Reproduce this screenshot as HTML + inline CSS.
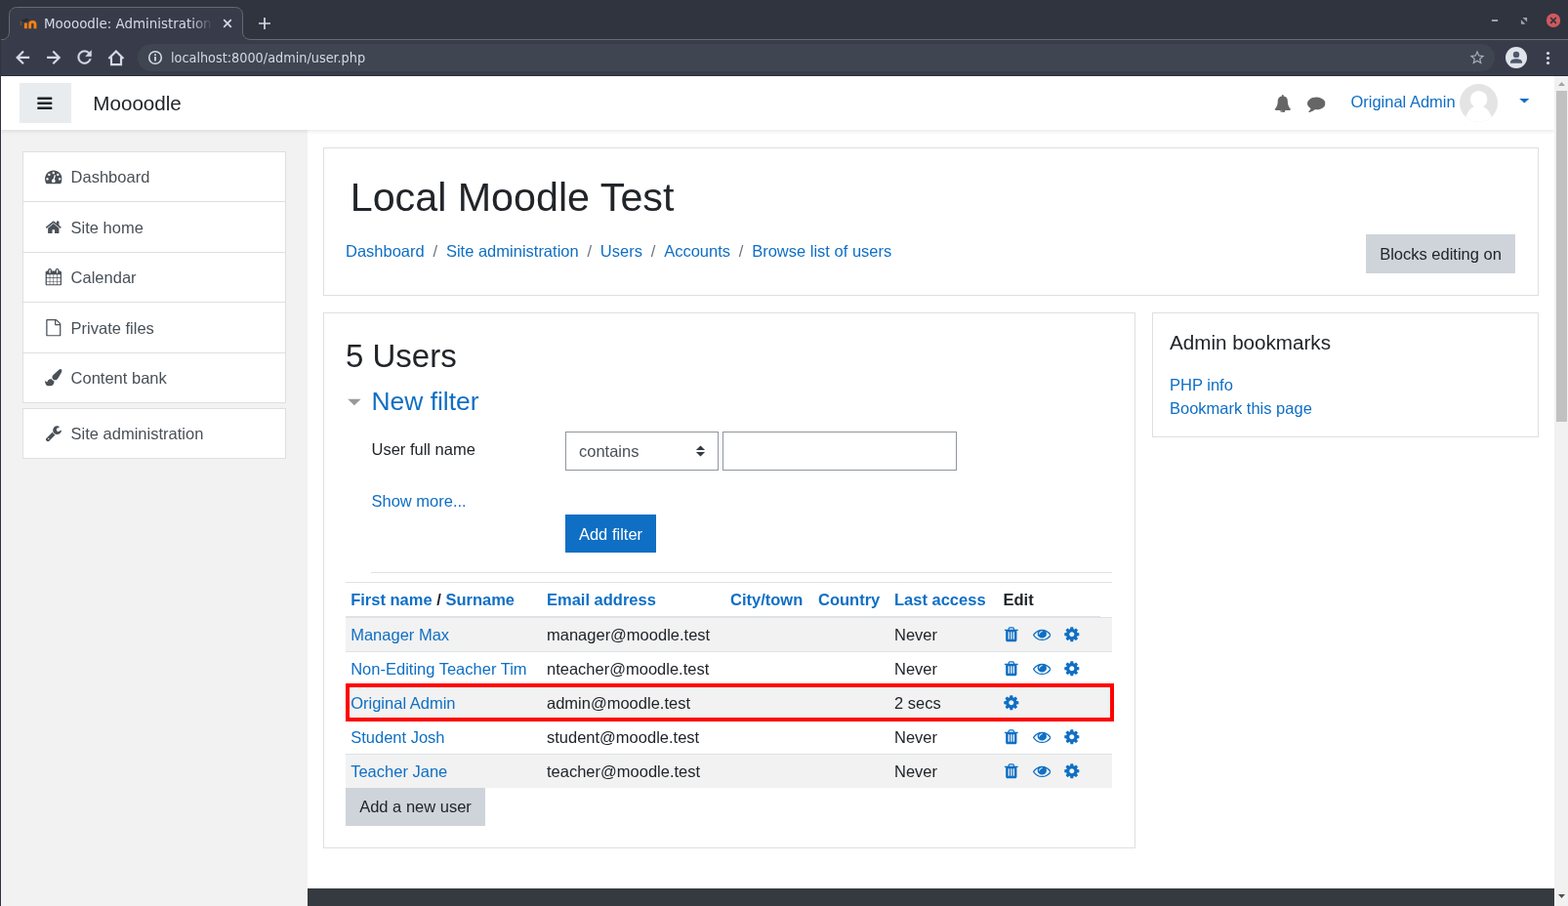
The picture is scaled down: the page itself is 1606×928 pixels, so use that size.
<!DOCTYPE html>
<html lang="en">
<head>
<meta charset="utf-8">
<title>Moooodle: Administration: Users: Accounts: Browse list of users</title>
<style>
*{box-sizing:border-box;margin:0;padding:0}
html,body{width:1606px;height:928px;overflow:hidden;background:#fff}
body{font-family:"Liberation Sans",Arial,sans-serif;font-size:16.5px;color:#212529;line-height:1.5;position:relative}
a{color:#0f6fc5;text-decoration:none}
.abs{position:absolute}
/* ---------- browser chrome ---------- */
#tabbar{position:absolute;left:0;top:0;width:1606px;height:41px;background:#2f343f}
#tab{position:absolute;left:9px;top:7px;width:240px;height:34px;background:#383c4a;border-radius:8px 8px 0 0;border:1px solid #4b5162;border-bottom:none}
#tabline{position:absolute;left:0;top:40px;width:1606px;height:1px;background:#666a75}
#toolbar{position:absolute;left:0;top:41px;width:1606px;height:37px;background:#383c4a}
#omni{position:absolute;left:141px;top:45px;width:1390px;height:28px;border-radius:14px;background:#404552}
.ui{font-family:"DejaVu Sans Condensed","Liberation Sans",sans-serif;color:#d3dae3;white-space:nowrap}
#winborder{position:absolute;left:0;top:0;width:1px;height:928px;background:#2f343f;z-index:50}
/* ---------- page ---------- */
#vp{position:absolute;left:1px;top:78px;width:1591px;height:850px;overflow:hidden;background:#fff}
#nav{position:absolute;left:0;top:0;width:1591px;height:55px;background:#fff;box-shadow:0 2px 4px rgba(0,0,0,.08);z-index:5}
#drawer{position:absolute;left:0;top:55px;width:314px;height:795px;background:#f2f2f2}
.li{position:absolute;left:22px;width:270px;border:1px solid #dfdfdf;background:#fff;color:#495057}
.li span{position:absolute;left:48.600px;top:13px;line-height:25px;white-space:nowrap}
.li svg{position:absolute;left:22px;top:16px;width:17.6px;height:17.6px;fill:#495057}
.card{position:absolute;border:1px solid #dfdfdf;background:#fff}
#footer{position:absolute;left:314px;top:832px;width:1277px;height:18px;background:#343a40}
#sb{position:absolute;left:1592px;top:78px;width:14px;height:850px;background:#f1f1f1}
#sbthumb{position:absolute;left:2px;top:15px;width:11px;height:339px;background:#c1c1c1}
.btn{position:absolute;white-space:nowrap;text-align:center;line-height:40px;height:40px}
.t{position:absolute;white-space:nowrap;line-height:1}
#vp,#url,#tabtitle{will-change:transform}

.crumb{position:absolute;top:166.5px;font-size:16.5px;line-height:25px;white-space:nowrap}
.sep{color:#6c757d;margin:0 8.8px}
#tbl{position:absolute;left:353px;top:518px;width:785px}
.row{position:absolute;left:0;width:785px;height:35px;border-top:1px solid #dee2e6}
.row.odd{background:#f2f2f2}
.c{position:absolute;top:5px;line-height:25px;white-space:nowrap;font-size:16.5px}
.th{position:absolute;top:6px;line-height:25px;white-space:nowrap;font-size:16.5px;font-weight:bold}
.ic{position:absolute;fill:#0f6fc5;width:17.6px;height:17.6px;top:8.3px;margin-left:-0.7px}
.ic.eye{width:18.6px;margin-left:-0.9px}

.ci{position:absolute;fill:#d3dae3}
.ci.b{stroke:#d3dae3;stroke-width:.35px}
</style>
</head>
<body>
<svg width="0" height="0" style="position:absolute"><defs>
<symbol id="i-cog" viewBox="0 0 1792 1792"><path d="M1152 896q0-106-75-181t-181-75-181 75-75 181 75 181 181 75 181-75 75-181zm512-109v222q0 12-8 23t-20 13l-185 28q-19 54-39 91 35 50 107 138 10 12 10 25t-9 23q-27 37-99 108t-94 71q-12 0-26-9l-138-108q-44 23-91 38-16 136-29 186-7 28-36 28h-222q-14 0-24.500-8.500t-11.500-21.500l-28-184q-49-16-90-37l-141 107q-10 9-25 9-14 0-25-11-126-114-165-168-7-10-7-23 0-12 8-23 15-21 51-66.500t54-70.500q-27-50-41-99l-183-27q-13-2-21-12.500t-8-23.500v-222q0-12 8-23t19-13l186-28q14-46 39-92-40-57-107-138-10-12-10-24 0-10 9-23 26-36 98.500-107.500t94.500-71.500q13 0 26 10l138 107q44-23 91-38 16-136 29-186 7-28 36-28h222q14 0 24.500 8.500t11.500 21.500l28 184q49 16 90 37l142-107q9-9 24-9 13 0 25 10 129 119 165 170 7 8 7 22 0 12-8 23-15 21-51 66.500t-54 70.500q26 50 41 98l183 28q13 2 21 12.500t8 23.500z"/></symbol>
<symbol id="i-eye" viewBox="0 0 1792 1792"><path d="M1664 960q-152-236-381-353 61 104 61 225 0 185-131.500 316.500t-316.500 131.500-316.500-131.500-131.500-316.500q0-121 61-225-229 117-381 353 133 205 333.500 326.500t434.500 121.500 434.500-121.500 333.500-326.500zm-720-384q0-20-14-34t-34-14q-125 0-214.500 89.500t-89.500 214.500q0 20 14 34t34 14 34-14 14-34q0-86 61-147t147-61q20 0 34-14t14-34zm848 384q0 34-20 69-140 230-376.500 368.500t-499.500 138.500-499.500-139-376.500-368q-20-35-20-69t20-69q140-229 376.500-368t499.500-139 499.500 139 376.500 368q20 35 20 69z"/></symbol>
<symbol id="i-trash" viewBox="0 0 1792 1792"><path d="M704 1376v-704q0-14-9-23t-23-9h-64q-14 0-23 9t-9 23v704q0 14 9 23t23 9h64q14 0 23-9t9-23zm256 0v-704q0-14-9-23t-23-9h-64q-14 0-23 9t-9 23v704q0 14 9 23t23 9h64q14 0 23-9t9-23zm256 0v-704q0-14-9-23t-23-9h-64q-14 0-23 9t-9 23v704q0 14 9 23t23 9h64q14 0 23-9t9-23zm-544-992h448l-48-117q-7-9-17-11h-317q-10 2-17 11zm928 32v64q0 14-9 23t-23 9h-96v948q0 83-47 143.500t-113 60.500h-832q-66 0-113-58.500t-47-141.500v-952h-96q-14 0-23-9t-9-23v-64q0-14 9-23t23-9h309l70-167q15-37 54-63t79-26h320q40 0 79 26t54 63l70 167h309q14 0 23 9t9 23z"/></symbol>
<symbol id="i-home" viewBox="0 0 1792 1792"><path d="M1472 992v480q0 26-19 45t-45 19h-384v-384h-256v384h-384q-26 0-45-19t-19-45v-480q0-1 .5-3t.5-3l575-474 575 474q1 2 1 6zm223-69l-62 74q-8 9-21 11h-3q-13 0-21-7l-692-577-692 577q-12 8-24 7-13-2-21-11l-62-74q-8-10-7-23.500t11-21.500l719-599q32-26 76-26t76 26l244 204v-195q0-14 9-23t23-9h192q14 0 23 9t9 23v408l219 182q10 8 11 21.500t-7 23.500z"/></symbol>
<symbol id="i-bars" viewBox="0 0 1792 1792"><path d="M1664 1344v128q0 26-19 45t-45 19h-1408q-26 0-45-19t-19-45v-128q0-26 19-45t45-19h1408q26 0 45 19t19 45zm0-512v128q0 26-19 45t-45 19h-1408q-26 0-45-19t-19-45v-128q0-26 19-45t45-19h1408q26 0 45 19t19 45zm0-512v128q0 26-19 45t-45 19h-1408q-26 0-45-19t-19-45v-128q0-26 19-45t45-19h1408q26 0 45 19t19 45z"/></symbol>
<symbol id="i-bell" viewBox="0 0 1792 1792"><path d="M912 1696q0-16-16-16-59 0-101.500-42.500t-42.500-101.500q0-16-16-16t-16 16q0 73 51.500 124.500t124.500 51.500q16 0 16-16zm816-288q0 52-38 90t-90 38h-448q0 106-75 181t-181 75-181-75-75-181h-448q-52 0-90-38t-38-90q50-42 91-88t85-119.500 74.500-158.500 50-206 19.500-260q0-152 117-282.500t307-158.500q-8-19-8-39 0-40 28-68t68-28 68 28 28 68q0 20-8 39 190 28 307 158.500t117 282.500q0 139 19.500 260t50 206 74.500 158.500 85 119.500 91 88z"/></symbol>
<symbol id="i-comment" viewBox="0 0 1792 1792"><path d="M1792 896q0 174-120 321.500t-326 233-450 85.500q-70 0-145-8-198 175-460 242-49 14-114 22-17 2-30.500-9t-17.500-29v-1q-3-4-.5-12t2-10 4.500-9.500l6-9 7-8.500 8-9q7-8 31-34.500t34.500-38 31-39.500 32.500-51 27-59 26-76q-157-89-247.500-220t-90.500-281q0-130 71-248.500t191-204.500 286-136.500 348-50.500q244 0 450 85.500t326 233 120 321.500z"/></symbol>
<symbol id="i-caret" viewBox="0 0 1792 1792"><path d="M1408 704q0 26-19 45l-448 448q-19 19-45 19t-45-19l-448-448q-19-19-19-45t19-45 45-19h896q26 0 45 19t19 45z"/></symbol>
<symbol id="i-calendar" viewBox="0 0 1792 1792"><path d="M192 1664h288v-288h-288v288zm352 0h320v-288h-320v288zm-352-352h288v-320h-288v320zm352 0h320v-320h-320v320zm-352-384h288v-288h-288v288zm736 736h320v-288h-320v288zm-384-736h320v-288h-320v288zm768 736h288v-288h-288v288zm-384-352h320v-320h-320v320zm-352-864v-288q0-13-9.500-22.500t-22.500-9.500h-64q-13 0-22.500 9.500t-9.500 22.500v288q0 13 9.500 22.500t22.500 9.500h64q13 0 22.500-9.500t9.500-22.500zm736 864h288v-320h-288v320zm-384-384h320v-288h-320v288zm384 0h288v-288h-288v288zm32-480v-288q0-13-9.500-22.500t-22.500-9.500h-64q-13 0-22.500 9.500t-9.500 22.500v288q0 13 9.500 22.500t22.500 9.500h64q13 0 22.500-9.500t9.500-22.500zm384-64v1280q0 52-38 90t-90 38h-1408q-52 0-90-38t-38-90v-1280q0-52 38-90t90-38h128v-96q0-66 47-113t113-47h64q66 0 113 47t47 113v96h384v-96q0-66 47-113t113-47h64q66 0 113 47t47 113v96h128q52 0 90 38t38 90z"/></symbol>
<symbol id="i-file" viewBox="0 0 1792 1792"><path d="M1596 380q28 28 48 76t20 88v1152q0 40-28 68t-68 28h-1344q-40 0-68-28t-28-68v-1600q0-40 28-68t68-28h896q40 0 88 20t76 48zm-444-244v376h376q-10-29-22-41l-313-313q-12-12-41-22zm384 1528v-1024h-416q-40 0-68-28t-28-68v-416h-768v1536h1280z"/></symbol>
<symbol id="i-wrench" viewBox="0 0 1792 1792"><path d="M448 1472q0-26-19-45t-45-19-45 19-19 45 19 45 45 19 45-19 19-45zm644-420l-682 682q-37 37-90 37-52 0-91-37l-106-108q-38-36-38-90 0-53 38-91l681-681q39 98 114.500 173.500t173.500 114.500zm634-435q0 39-23 106-47 134-164.500 217.500t-258.500 83.500q-185 0-316.500-131.500t-131.500-316.500 131.500-316.500 316.500-131.500q58 0 121.500 16.500t107.500 46.500q16 11 16 28t-16 28l-293 169v224l193 107q5-3 79-48.500t135.500-81 70.500-35.500q15 0 23.500 10t8.500 25z"/></symbol>
<symbol id="i-tacho" viewBox="0 0 1792 1792"><path d="M384 1152q0-53-37.500-90.500t-90.500-37.500-90.500 37.500-37.500 90.500 37.500 90.500 90.500 37.500 90.500-37.500 37.500-90.500zm192-448q0-53-37.500-90.500t-90.500-37.500-90.500 37.500-37.500 90.500 37.500 90.500 90.500 37.500 90.500-37.500 37.500-90.500zm428 481l101-382q6-26-7.500-48.500t-38.500-29.500-48 6.500-30 39.500l-101 382q-60 5-107 43.500t-63 98.500q-20 77 20 146t117 89 146-20 89-117q16-60-6-117t-72-91zm660-33q0-53-37.500-90.500t-90.500-37.500-90.500 37.500-37.500 90.500 37.500 90.500 90.500 37.500 90.500-37.500 37.500-90.500zm-640-640q0-53-37.500-90.500t-90.500-37.500-90.500 37.500-37.500 90.500 37.500 90.500 90.500 37.500 90.500-37.500 37.500-90.500zm448 192q0-53-37.500-90.500t-90.500-37.500-90.500 37.500-37.500 90.500 37.500 90.500 90.500 37.500 90.500-37.500 37.500-90.500zm320 448q0 261-141 483-19 29-54 29h-1402q-35 0-54-29-141-221-141-483 0-182 71-348t191-286 286-191 348-71 348 71 286 191 191 286 71 348z"/></symbol>
<symbol id="i-brush" viewBox="0 0 1792 1792"><path d="M1615 0q70 0 122.500 46.500t52.500 116.500q0 63-45 151-332 629-465 752-97 91-218 91-126 0-216.500-92.500t-90.500-219.500q0-128 92-212l638-579q59-54 130-54zm-909 1034q39 76 106.500 130t150.500 76l1 71q4 213-129.500 347t-348.500 134q-123 0-218-46.500t-152.500-127.500-86.500-183-29-220q7 5 41 30t62 44.500 59 36.500 46 17q41 0 55-37 25-66 57.500-112.500t69.500-76 88-47.500 103-25.500 125-10.500z"/></symbol>
</defs></svg>
<div id="tabbar"></div>
<div id="tabline"></div>
<div id="toolbar"></div>
<div id="omni"></div>
<div class="abs" style="left:0;top:77px;width:1606px;height:1px;background:#2b2e39"></div>
<svg class="abs" style="left:0;top:0" width="270" height="42" viewBox="0 0 270 42"><path d="M0.5 41 C6 41 9.5 38 9.5 32 L9.5 15.5 C9.5 10.5 12.5 7.5 17.5 7.5 L240.5 7.5 C245.5 7.5 248.5 10.5 248.5 15.5 L248.5 32 C248.5 38 252 40.5 258 40.5 L258 42 L0.5 42 Z" fill="#383c4a" stroke="#666a75" stroke-width="1"/><rect x="0" y="41" width="270" height="1" fill="#383c4a"/></svg>
<svg class="abs" style="left:20px;top:17px" width="19" height="13" viewBox="0 0 19 13"><rect x="4.900" y="6.500" width="2.900" height="5.700" fill="#f98012"/><path d="M10.650 12.200V8a2.650 2.650 0 0 1 5.300 0v4.200" fill="none" stroke="#f98012" stroke-width="2.900"/><path d="M1.400 4.800v4.300" stroke="#f98012" stroke-width="0.800" opacity=".55"/><path d="M1.600 4.100L7.200 1.700l3.300 1.500L5.600 5.800z" fill="#2b2b2b"/></svg>
<svg class="ci" style="left:227px;top:18px" width="12" height="12" viewBox="0 0 12 12"><path d="M2.2 2.2l7.6 7.6M9.8 2.2l-7.6 7.6" stroke="#d3dae3" stroke-width="1.7" fill="none"/></svg>
<svg class="ci" style="left:264px;top:17px" width="14" height="14" viewBox="0 0 14 14"><path d="M7 1v12M1 7h12" stroke="#d3dae3" stroke-width="1.7" fill="none"/></svg>
<svg class="abs" style="left:12px;top:48px" width="22" height="22" viewBox="0 0 22 22" fill="none" stroke="#d3dae3" stroke-width="2.150"><path d="M12 4.500L5.600 10.900l6.400 6.400M6.500 10.900H18.200"/></svg>
<svg class="abs" style="left:44px;top:48px" width="22" height="22" viewBox="0 0 22 22" fill="none" stroke="#d3dae3" stroke-width="2.150"><path d="M10.300 4.500l6.400 6.400-6.400 6.400M4.100 10.900H15.800"/></svg>
<svg class="ci b" style="left:76.300px;top:48px" width="21.200" height="21.200" viewBox="0 0 24 24"><path d="M17.65 6.35C16.2 4.9 14.21 4 12 4c-4.42 0-7.99 3.58-7.99 8s3.57 8 7.99 8c3.73 0 6.84-2.55 7.73-6h-2.08c-.82 2.33-3.04 4-5.65 4-3.31 0-6-2.69-6-6s2.69-6 6-6c1.66 0 3.14.69 4.22 1.78L13 11h7V4l-2.35 2.35z"/></svg>
<svg class="abs" style="left:108px;top:48px" width="22" height="22" viewBox="0 0 22 22" fill="none" stroke="#d3dae3" stroke-width="2.150"><path d="M3.400 11.900L10.930 4.450l7.530 7.450"/><path d="M6 10.300V18.050h10.030V10.300"/></svg>
<svg class="ci" style="left:150.900px;top:51.300px" width="16" height="16" viewBox="0 0 16 16"><circle cx="8" cy="8" r="6.300" fill="none" stroke="#d3dae3" stroke-width="1.600"/><rect x="7.100" y="7" width="1.800" height="4.500"/><rect x="7.100" y="4.300" width="1.800" height="1.800"/></svg>
<svg class="ci" style="left:1504px;top:50.3px;fill:#a9adb7" width="18" height="18" viewBox="0 0 24 24"><path d="M22 9.24l-7.19-.62L12 2 9.19 8.63 2 9.24l5.46 4.73L5.82 21 12 17.27 18.18 21l-1.63-7.03L22 9.24zM12 15.4l-3.76 2.27 1-4.28-3.32-2.88 4.38-.38L12 6.1l1.71 4.04 4.38.38-3.32 2.88 1 4.28L12 15.4z"/></svg>
<svg class="abs" style="left:1542.100px;top:48.050px" width="22" height="22" viewBox="0 0 22 22"><circle cx="11" cy="11" r="11" fill="#dfe3ea"/><circle cx="11" cy="7.900" r="3.200" fill="#4f586b"/><path d="M5 15.600c0-2.200 3-3.400 6-3.400s6 1.200 6 3.400v1.100H5z" fill="#4f586b"/></svg>
<svg class="ci" style="left:1583px;top:52px" width="5" height="16" viewBox="0 0 5 16"><circle cx="2.500" cy="2.500" r="1.600"/><circle cx="2.500" cy="7.500" r="1.600"/><circle cx="2.500" cy="12.500" r="1.600"/></svg>
<svg class="abs" style="left:1526px;top:13px" width="80" height="16" viewBox="0 0 80 16"><rect x="1.900" y="6.900" width="6.200" height="2.200" rx="0.500" fill="#a0a3ac"/><path d="M33.500 5h4.600v4.600zM31.900 7.200v4.600h4.600z" fill="#a0a3ac"/><circle cx="65" cy="7.900" r="7.150" fill="#d2585f"/><path d="M62.100 5l5.800 5.800M67.900 5l-5.800 5.800" stroke="#2f343f" stroke-width="1.700" fill="none"/></svg>
<div class="t ui" id="tabtitle" style="left:44.500px;top:16.800px;font-size:14.9px;width:173px;overflow:hidden;-webkit-mask-image:linear-gradient(90deg,#000 151px,transparent 173px)">Moooodle: Administration: Users: Accounts: Browse list of users</div>
<div class="t ui" id="url" style="left:175px;top:51.500px;font-size:14.3px">localhost:8000/admin/user.php</div>

<div id="vp">
 <div id="nav">
  <div class="abs" style="left:19px;top:7px;width:53px;height:41px;background:#e9ecef"></div>
  <svg class="abs" style="left:36.4px;top:19px;width:17.6px;height:17.6px;fill:#212529"><use href="#i-bars"/></svg>
  <svg class="abs" style="left:1303.8px;top:18.6px;width:17.6px;height:18.700px;fill:#666" viewBox="0 0 1792 1792" preserveAspectRatio="none"><use href="#i-bell"/></svg>
  <svg class="abs" style="left:1338.2px;top:19.2px;width:18.500px;height:17.900px;fill:#666" viewBox="0 0 1792 1792" preserveAspectRatio="none"><use href="#i-comment"/></svg>
  <svg class="abs" id="avatar" style="left:1494px;top:7.9px;width:39px;height:39px" viewBox="0 0 39 39"><defs><clipPath id="avc"><circle cx="19.5" cy="19.5" r="19.5"/></clipPath></defs><circle cx="19.5" cy="19.5" r="19.5" fill="#e4e4e4"/><g clip-path="url(#avc)" fill="#fff"><circle cx="19.6" cy="15.7" r="8.8"/><path d="M5.5 39 C6 30 11 24.5 15.5 23 L23.5 23 C28 24.5 33 30 33.5 39 Z"/></g></svg>
  <svg class="abs" style="left:1555px;top:22px" width="12" height="7" viewBox="0 0 12 7"><path d="M0.200 0.900h10.200L5.300 5.500z" fill="#0f6fc5"/></svg>
  <div class="t" id="brand" style="left:94.300px;top:18.200px;font-size:20.625px;color:#212529">Moooodle</div>
  <a class="t" id="uname" style="left:1382.400px;top:18px;font-size:16.5px">Original Admin</a>
 </div>
 <div id="drawer">
  <div class="li" style="top:22px;height:52px"><svg><use href="#i-tacho"/></svg><span>Dashboard</span></div>
  <div class="li" style="top:73px;height:53px"><svg style="top:17px"><use href="#i-home"/></svg><span style="top:14px">Site home</span></div>
  <div class="li" style="top:125px;height:52px"><svg><use href="#i-calendar"/></svg><span>Calendar</span></div>
  <div class="li" style="top:176px;height:53px"><svg style="top:17px"><use href="#i-file"/></svg><span style="top:14px">Private files</span></div>
  <div class="li" style="top:228px;height:52px"><svg><use href="#i-brush"/></svg><span>Content bank</span></div>
  <div class="li" style="top:285px;height:52px"><svg><use href="#i-wrench"/></svg><span>Site administration</span></div>
 </div>
 <div class="card" id="hdr" style="left:330px;top:73px;width:1245px;height:152px"></div>
 <div class="t" id="h1" style="left:357.7px;top:104px;font-size:41.25px;color:#212529">Local Moodle Test</div>
 <div class="crumb" id="bc" style="left:353px"><a>Dashboard</a><span class="sep">/</span><a>Site administration</a><span class="sep">/</span><a>Users</a><span class="sep">/</span><a>Accounts</a><span class="sep">/</span><a>Browse list of users</a></div>
 <div class="btn" id="bedit" style="left:1398px;top:162px;width:153px;background:#ced4da;color:#212529">Blocks editing on</div>
 <div class="card" id="main" style="left:330px;top:242px;width:832px;height:549px"></div>
 <div class="t" id="h2" style="left:353px;top:270px;font-size:33px;color:#212529">5 Users</div>
 <a class="t" id="h3" style="left:379.5px;top:320px;font-size:26.4px">New filter</a>
 <svg class="abs" id="caret" style="left:354px;top:329px" width="16" height="10" viewBox="0 0 16 10"><path d="M1.200 1.700h13.400L7.900 8.300z" fill="#999"/></svg>
 <div class="t" id="lbl" style="left:379.5px;top:374px;font-size:16.5px">User full name</div>
 <div class="abs" id="sel" style="left:578px;top:364px;width:157px;height:40px;border:1px solid #8f959e;background:#fff"><span class="t" style="left:13px;top:11px;font-size:16.5px;color:#495057">contains</span><svg class="abs" style="left:131.500px;top:12.600px" width="11" height="12" viewBox="0 0 11 12"><path d="M0.900 5L5.500 0.500l4.600 4.500zM0.900 7L5.500 11.500l4.600-4.500z" fill="#343a40"/></svg></div>
 <div class="abs" id="inp" style="left:739px;top:364px;width:240px;height:40px;border:1px solid #8f959e;background:#fff"></div>
 <a class="t" id="more" style="left:379.5px;top:427px;font-size:16.5px">Show more...</a>
 <div class="btn" id="addf" style="left:578px;top:449px;width:93px;height:39px;line-height:40px;background:#0f6fc5;color:#fff">Add filter</div>
 <div class="abs" style="left:379px;top:508px;width:759px;height:1px;background:#dee2e6"></div>
 <div id="tbl">
  <div class="abs" style="left:0;top:0;width:785px;height:1px;background:#dee2e6"></div>
  <div class="abs" style="left:0;top:35px;width:773px;height:2px;background:#dee2e6"></div>
  <div class="th" style="left:5.2px"><a>First name</a> / <a>Surname</a></div>
  <a class="th" style="left:206px">Email address</a>
  <a class="th" style="left:394px">City/town</a>
  <a class="th" style="left:484px">Country</a>
  <a class="th" style="left:562px">Last access</a>
  <span class="th" style="left:673.5px">Edit</span>
  <div class="row odd" style="top:36px"><a class="c" style="left:5.2px">Manager Max</a><span class="c" style="left:206px">manager@moodle.test</span><span class="c" style="left:562px">Never</span><svg class="ic" style="left:673.5px"><use href="#i-trash"/></svg><svg class="ic eye" style="left:704.5px" viewBox="0 0 1792 1792" preserveAspectRatio="none"><use href="#i-eye"/></svg><svg class="ic" style="left:735.5px"><use href="#i-cog"/></svg></div>
  <div class="row" style="top:71px"><a class="c" style="left:5.2px">Non-Editing Teacher Tim</a><span class="c" style="left:206px">nteacher@moodle.test</span><span class="c" style="left:562px">Never</span><svg class="ic" style="left:673.5px"><use href="#i-trash"/></svg><svg class="ic eye" style="left:704.5px" viewBox="0 0 1792 1792" preserveAspectRatio="none"><use href="#i-eye"/></svg><svg class="ic" style="left:735.5px"><use href="#i-cog"/></svg></div>
  <div class="row odd" style="top:106px"><a class="c" style="left:5.2px">Original Admin</a><span class="c" style="left:206px">admin@moodle.test</span><span class="c" style="left:562px">2 secs</span><svg class="ic" style="left:673.5px"><use href="#i-cog"/></svg></div>
  <div class="row" style="top:141px"><a class="c" style="left:5.2px">Student Josh</a><span class="c" style="left:206px">student@moodle.test</span><span class="c" style="left:562px">Never</span><svg class="ic" style="left:673.5px"><use href="#i-trash"/></svg><svg class="ic eye" style="left:704.5px" viewBox="0 0 1792 1792" preserveAspectRatio="none"><use href="#i-eye"/></svg><svg class="ic" style="left:735.5px"><use href="#i-cog"/></svg></div>
  <div class="row odd" style="top:176px"><a class="c" style="left:5.2px">Teacher Jane</a><span class="c" style="left:206px">teacher@moodle.test</span><span class="c" style="left:562px">Never</span><svg class="ic" style="left:673.5px"><use href="#i-trash"/></svg><svg class="ic eye" style="left:704.5px" viewBox="0 0 1792 1792" preserveAspectRatio="none"><use href="#i-eye"/></svg><svg class="ic" style="left:735.5px"><use href="#i-cog"/></svg></div>
 </div>
 <div class="abs" id="red" style="left:353px;top:622px;width:787px;height:39px;border:4px solid #ff0000"></div>
 <div class="btn" id="addu" style="left:353px;top:729px;width:143px;height:39px;line-height:39px;background:#ced4da;color:#212529">Add a new user</div>
 <div class="card" id="blk" style="left:1179px;top:242px;width:396px;height:128px"></div>
 <div class="t" id="h5" style="left:1197px;top:262.5px;font-size:20.625px;color:#212529">Admin bookmarks</div>
 <a class="t" id="l1" style="left:1197px;top:308px;font-size:16.5px">PHP info</a>
 <a class="t" id="l2" style="left:1197px;top:332px;font-size:16.5px">Bookmark this page</a>
 <div id="footer"></div>
</div>
<div id="sb"><div id="sbthumb"></div><svg class="abs" style="left:0;top:0" width="14" height="850" viewBox="0 0 14 850"><path d="M4 10l3.500-4 3.500 4z" fill="#a3a3a3"/><path d="M4 838l3.500 4 3.500-4z" fill="#505050"/></svg></div>
<div id="winborder"></div>
</body>
</html>
